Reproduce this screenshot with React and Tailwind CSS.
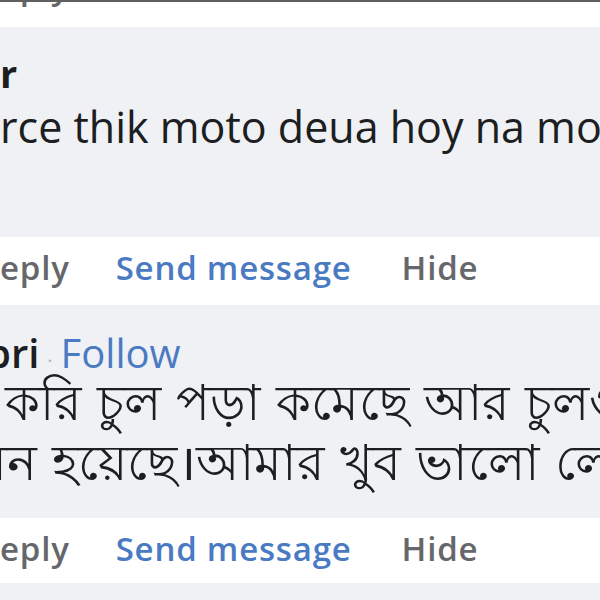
const ActionRow = ({ onlyReply = false }) => (
  <div className="flex items-baseline whitespace-nowrap text-[33px] font-semibold leading-none tracking-[0.8px]">
    <span className="text-[#65676b]">eply</span>
    {!onlyReply && (
      <>
        <span className="ml-[46px] text-[#4a7ac2]">Send message</span>
        <span className="ml-[50px] text-[#65676b]">Hide</span>
      </>
    )}
  </div>
);

export default function App() {
  return (
    <div
      className="w-[600px] h-[600px] overflow-hidden bg-[#eff1f5] text-[#1c1e21]"
      style={{ fontFamily: '"Open Sans", "Noto Sans", sans-serif' }}
    >
      <div className="h-[2px] bg-[#5f5f5f]" />
      <div className="h-[25px] bg-white overflow-hidden">
        <div className="-mt-[32px]">
          <ActionRow onlyReply />
        </div>
      </div>

      <div className="h-[210px] pt-[26px]">
        <div className="text-[38px] font-bold leading-[40px]">r</div>
        <div className="mt-[10px] text-[43px] leading-[48px] whitespace-nowrap">
          rce thik moto deua hoy na mon
        </div>
      </div>

      <div className="h-[68px] bg-white pt-[14px]">
        <ActionRow />
      </div>

      <div className="h-[213px] pt-[26px]">
        <div className="flex items-baseline text-[40px] leading-[44px] whitespace-nowrap">
          <span className="-ml-[14px] font-semibold">pri</span>
          <span className="mx-[8px] text-[#b0b3b8] text-[20px]">·</span>
          <span className="text-[#4a7ac2]">Follow</span>
        </div>
        <div className="-mt-[12px] text-[50px] leading-[60px] whitespace-nowrap [word-spacing:2px]">
          <div className="-ml-[38px]">র করি চুল পড়া কমেছে আর চুলগুলো</div>
          <div className="-ml-[24px]">ঘন হয়েছে।আমার খুব ভালো লেগেছে</div>
        </div>
      </div>

      <div className="h-[65px] bg-white pt-[14px]">
        <ActionRow />
      </div>
    </div>
  );
}
